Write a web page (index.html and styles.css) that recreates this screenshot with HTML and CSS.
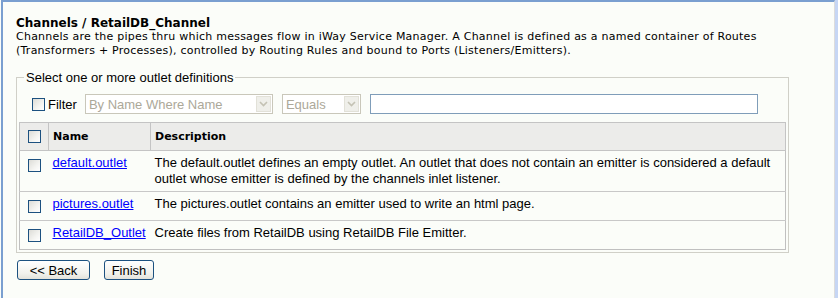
FILE: index.html
```html
<!DOCTYPE html>
<html lang="en">

<head>
   <meta charset="UTF-8">
   <title>Channels / RetailDB_Channel</title>
   <link rel="stylesheet" href="styles.css">
</head>

<body>
   <div class="frame">
      <h1 class="title">Channels / RetailDB_Channel</h1>
      <p class="intro">Channels are the pipes thru which messages flow in iWay Service Manager. A Channel is defined as a named container of Routes (Transformers + Processes), controlled by Routing Rules and bound to Ports (Listeners/Emitters).</p>

      <fieldset class="outlets">
         <legend>Select one or more outlet definitions</legend>

         <!-- filter bar -->
         <div class="filter-row">
            <label class="filter-label"><input type="checkbox" class="cb"> Filter</label>
            <div class="select select-field">
               <span class="select-value">By Name Where Name</span>
               <span class="select-arrow"><svg width="9" height="6" viewBox="0 0 9 6"><path d="M1 1 L4.5 4.5 L8 1" fill="none" stroke="#c4c2b4" stroke-width="1.6"/></svg></span>
            </div>
            <div class="select select-op">
               <span class="select-value">Equals</span>
               <span class="select-arrow"><svg width="9" height="6" viewBox="0 0 9 6"><path d="M1 1 L4.5 4.5 L8 1" fill="none" stroke="#c4c2b4" stroke-width="1.6"/></svg></span>
            </div>
            <input type="text" class="filter-text">
         </div>

         <table class="outlet-table">
            <tr>
               <th class="col-check"><input type="checkbox" class="cb"></th>
               <th class="col-name">Name</th>
               <th class="col-desc">Description</th>
            </tr>
            <tr>
               <td class="col-check"><input type="checkbox" class="cb"></td>
               <td class="col-name"><a href="#">default.outlet</a></td>
               <td class="col-desc">The default.outlet defines an empty outlet. An outlet that does not contain an emitter is considered a default outlet whose emitter is defined by the channels inlet listener.</td>
            </tr>
            <tr>
               <td class="col-check"><input type="checkbox" class="cb"></td>
               <td class="col-name"><a href="#">pictures.outlet</a></td>
               <td class="col-desc">The pictures.outlet contains an emitter used to write an html page.</td>
            </tr>
            <tr>
               <td class="col-check"><input type="checkbox" class="cb"></td>
               <td class="col-name"><a href="#">RetailDB_Outlet</a></td>
               <td class="col-desc">Create files from RetailDB using RetailDB File Emitter.</td>
            </tr>
         </table>
      </fieldset>

      <div class="buttons">
         <button class="btn btn-back">&lt;&lt; Back</button>
         <button class="btn btn-finish">Finish</button>
      </div>
   </div>
</body>

</html>
```

FILE: styles.css
```css
      body {
         margin: 0;
         background-color: #fbfdf9;
         font-family: "DejaVu Sans", Verdana, sans-serif;
         height: 100vh;
         overflow: hidden;
      }

      /* page frame with the blue border */
      .frame {
         margin-left: 1px;
         width: 834px;
         height: 100%;
         padding: 14px 0 0 13px;
         box-sizing: border-box;
         border-left: 2px solid #7a9fd0;
         border-top: 2px solid #7a9fd0;
         border-right: 1px solid #dcdcdc;
         box-shadow: 3px 0 0 #c6d6f4;
      }

      .title {
         margin: 0;
         font-size: 12px;
         line-height: 14px;
         font-weight: bold;
         color: #000;
      }

      .intro {
         margin: 0;
         width: 770px;
         font-size: 11px;
         line-height: 14px;
         letter-spacing: 0.24px;
         color: #000;
      }

      .outlets {
         margin: 12px 0 0 0;
         width: 773px;
         box-sizing: border-box;
         padding: 0 2px 2px 2px;
         border: 1px solid #d0d0c8;
         min-width: 0;
      }

      .outlets legend {
         margin-left: 5px;
         padding: 0 2px;
         font-family: "Liberation Sans", Arial, sans-serif;
         font-size: 13px;
         color: #000;
      }

      .filter-row {
         display: flex;
         align-items: center;
         height: 20px;
         margin-top: 9px;
         padding-left: 13px;
         font-family: "Liberation Sans", Arial, sans-serif;
         font-size: 13px;
      }

      .filter-label {
         display: flex;
         align-items: center;
         gap: 3px;
         margin-right: 8px;
      }

      /* XP style checkbox */
      .cb {
         appearance: none;
         -webkit-appearance: none;
         width: 13px;
         height: 13px;
         margin: 0;
         border: 1px solid #1c5180;
         box-sizing: border-box;
         background: linear-gradient(135deg, #dcdcd7 0%, #f4f4f1 60%, #ffffff 100%);
      }

      .select {
         display: flex;
         align-items: center;
         height: 20px;
         box-sizing: border-box;
         border: 1px solid #c9c7ba;
         background-color: #fff;
         color: #aca899;
      }

      .select-field {
         width: 188px;
         margin-right: 9px;
      }

      .select-op {
         width: 79px;
         margin-right: 9px;
      }

      .select-value {
         flex: 1;
         padding-left: 3px;
      }

      .select-arrow {
         display: flex;
         align-items: center;
         justify-content: center;
         width: 15px;
         height: 16px;
         margin-right: 1px;
         background-color: #efefea;
         border: 1px solid #e2e1d8;
         box-sizing: border-box;
      }

      .filter-text {
         width: 388px;
         height: 20px;
         box-sizing: border-box;
         border: 1px solid #7f9db9;
         margin: 0;
         padding: 0 3px;
         background-color: #fff;
      }

      .outlet-table {
         margin-top: 8px;
         width: 767px;
         border-collapse: collapse;
         table-layout: fixed;
         border: 1px solid #c0c0c0;
      }

      .outlet-table th {
         background-color: #ececea;
         border: 1px solid #c4c4c4;
         text-align: left;
         font-size: 11px;
         font-weight: bold;
         height: 27px;
         padding: 0 4px;
         vertical-align: middle;
      }

      .outlet-table td {
         border-top: 1px solid #c8c8c8;
         font-family: "Liberation Sans", Arial, sans-serif;
         font-size: 13px;
         line-height: 16px;
         padding: 4px;
         vertical-align: top;
      }

      .outlet-table .col-check {
         width: 28px;
         padding: 8px 0 7px 0;
      }

      .outlet-table th.col-check {
         padding: 0;
      }

      .outlet-table .cb {
         display: block;
         margin: 0 auto;
      }

      .outlet-table .col-name {
         width: 93px;
      }

      .outlet-table a {
         color: #0000ff;
      }

      .buttons {
         display: flex;
         gap: 14px;
         margin: 7px 0 0 1px;
      }

      .btn {
         height: 20px;
         padding: 0;
         border: 1px solid #1c5180;
         border-radius: 3px;
         background: linear-gradient(#ffffff, #f1f1ec 70%, #e3e2da);
         font-family: "Liberation Sans", Arial, sans-serif;
         font-size: 13px;
         color: #000;
         white-space: nowrap;
      }

      .btn-back {
         width: 73px;
      }

      .btn-finish {
         width: 50px;
      }
```
